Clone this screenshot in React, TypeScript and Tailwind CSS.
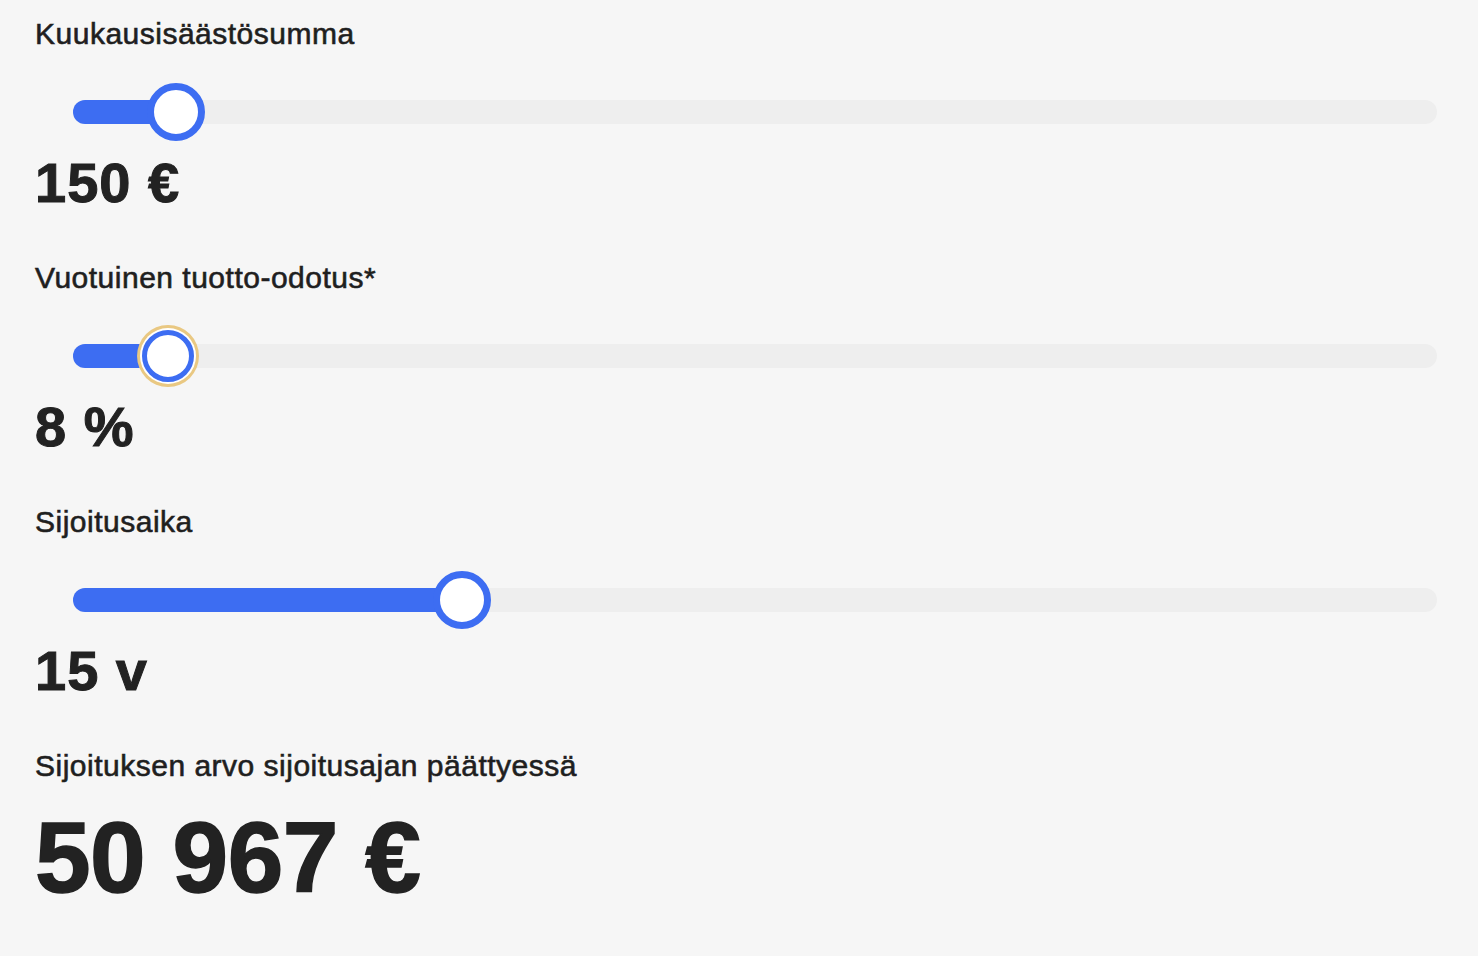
import React from 'react';

interface SliderRowProps {
  label: string;
  value: string;
  thumbX: number; // thumb centre, px from track start
  focused?: boolean;
}

const labelClass =
  'text-[30px] leading-[40px] tracking-[0.5px] text-[#1f1f1f] [-webkit-text-stroke:0.6px_#1f1f1f]';

const SliderRow: React.FC<SliderRowProps> = ({ label, value, thumbX, focused }) => {
  return (
    <div className="flex flex-col">
      <div className={labelClass}>{label}</div>
      <div className="relative mt-[28px] ml-[38px] mr-[6px] h-[60px] flex items-center">
        <div className="relative w-full h-[24px] rounded-full bg-[#eeeeee]">
          <div className="absolute left-0 top-0 h-full rounded-full bg-[#3d6df2]" style={{ width: thumbX }} />
        </div>
        {focused ? (
          <div
            className="absolute top-1/2 -translate-x-1/2 -translate-y-1/2 w-[52px] h-[52px] rounded-full bg-white border-[5px] border-[#3d6df2] shadow-[0_0_0_2px_#ffffff,0_0_0_5px_#e9c882]"
            style={{ left: thumbX }}
          />
        ) : (
          <div
            className="absolute top-1/2 -translate-x-1/2 -translate-y-1/2 w-[58px] h-[58px] rounded-full bg-white border-[7px] border-[#3d6df2]"
            style={{ left: thumbX }}
          />
        )}
      </div>
      <div className="mt-[11px] text-[56px] leading-[60px] font-bold tracking-[1px] text-[#222222] [-webkit-text-stroke:1px_#222222]">
        {value}
      </div>
    </div>
  );
};

export default function App() {
  return (
    <div
      className="min-h-[956px] w-full bg-[#f6f6f6] px-[35px] pt-[14px]"
      style={{ fontFamily: '"Liberation Sans", Arial, sans-serif' }}
    >
      <div className="flex flex-col gap-[45px]">
        <SliderRow label="Kuukausisäästösumma" value="150 €" thumbX={103} />
        <SliderRow label="Vuotuinen tuotto-odotus*" value="8 %" thumbX={95} focused />
        <SliderRow label="Sijoitusaika" value="15 v" thumbX={389} />
        <div className="flex flex-col">
          <div className={labelClass}>Sijoituksen arvo sijoitusajan päättyessä</div>
          <div className="mt-[21px] text-[100px] leading-[100px] font-bold tracking-[-0.5px] text-[#222222] [-webkit-text-stroke:1.5px_#222222]">
            50 967 €
          </div>
        </div>
      </div>
    </div>
  );
}
